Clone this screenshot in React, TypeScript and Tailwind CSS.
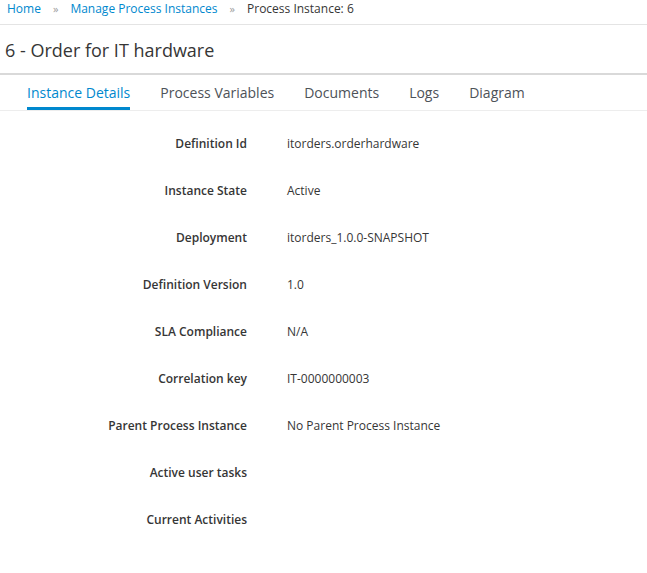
const rows: [string, string][] = [
  ["Definition Id", "itorders.orderhardware"],
  ["Instance State", "Active"],
  ["Deployment", "itorders_1.0.0-SNAPSHOT"],
  ["Definition Version", "1.0"],
  ["SLA Compliance", "N/A"],
  ["Correlation key", "IT-0000000003"],
  ["Parent Process Instance", "No Parent Process Instance"],
  ["Active user tasks", ""],
  ["Current Activities", ""],
];

const tabs = ["Instance Details", "Process Variables", "Documents", "Logs", "Diagram"];

export default function App() {
  return (
    <div className="min-h-[573px] bg-white text-[#363636]" style={{ fontFamily: '"Open Sans", sans-serif' }}>
      <div className="flex h-[25px] items-start gap-[12px] border-b border-[#e4e4e4] px-[7px] pt-[1px] text-[12px] leading-[16px]">
        <a className="text-[#0088ce]">Home</a>
        <span className="text-[11px] text-[#9c9c9c]">»</span>
        <a className="text-[#0088ce]">Manage Process Instances</a>
        <span className="text-[11px] text-[#9c9c9c]">»</span>
        <span>Process Instance: 6</span>
      </div>
      <h1 className="flex h-[50px] items-center border-b-2 border-[#d9d9d9] px-[5px] pt-[2px] text-[18px] leading-none">
        6 - Order for IT hardware
      </h1>
      <div className="flex h-[36px] gap-[30px] border-b border-[#ededed] pl-[27px] text-[14px]">
        {tabs.map((t, i) => (
          <div
            key={t}
            className={
              i === 0
                ? "flex items-center border-b-[3px] border-[#0088ce] pt-[3px] text-[#0088ce]"
                : "flex items-center text-[#4d5258]"
            }
          >
            {t}
          </div>
        ))}
      </div>
      <div className="pt-[24px] text-[12px]">
        {rows.map(([k, v]) => (
          <div key={k} className="flex h-[47px] items-start">
            <div className="w-[247px] text-right font-semibold">{k}</div>
            <div className="pl-[40px]">{v}</div>
          </div>
        ))}
      </div>
    </div>
  );
}
